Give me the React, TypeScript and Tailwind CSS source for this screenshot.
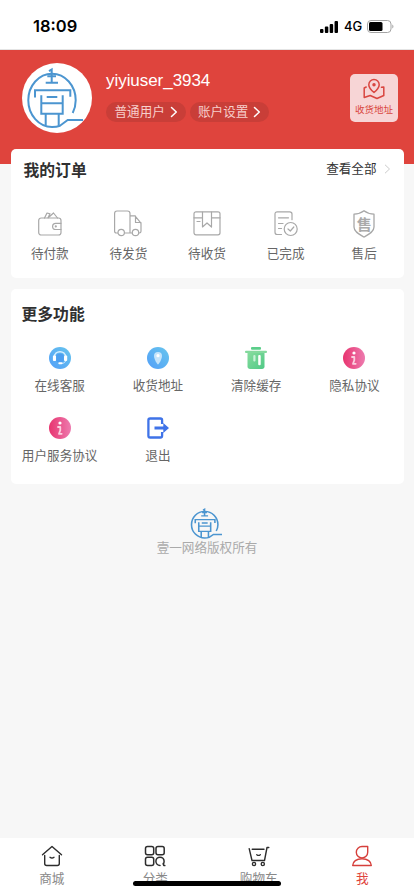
import React from 'react';

const iconProps = {
  fill: 'none',
  strokeLinecap: 'round' as const,
  strokeLinejoin: 'round' as const,
};

function Logo({ className }: { className: string }) {
  return (
    <svg viewBox="0 0 70 70" preserveAspectRatio="none" className={className} fill="none" stroke="#4b95d0">
      <path d="M50.700 50C52.700 46 53.700 42 53.700 37.300 53.700 22.600 43.100 10.700 30 10.700S6.300 22.600 6.300 37.300 16.900 64 30 64c3 0 5.700-.4 8-1.300L45.700 57H61" />
      <path d="M27 8.200l2.700-1.700v13.200M25.300 13.300H34M23.700 19.700H36" />
      <path d="M13 34.500V27.300H48.300v6.500M24.700 34H35.300" />
      <path d="M19.300 32.300v18.400h21.400V32.300M19.300 40.300h21.400M23.700 51v11.500M36.700 51v11.500" />
    </svg>
  );
}

function WalletIcon() {
  return (
    <svg viewBox="0 0 28 28" className="size-7" {...iconProps} stroke="#a8a8a8" strokeWidth="1.2">
      <rect x="2.700" y="8" width="22.300" height="17" rx="2.500" />
      <path d="M8.500 8l2.500-5 3 .8-2 4M12.500 7.500l5-4.500 4 5M25 13.300h-5.300a3 3 0 0 0 0 6.200H25" />
      <circle cx="19.800" cy="16.400" r=".5" />
    </svg>
  );
}

function TruckIcon() {
  return (
    <svg viewBox="0 0 28 28" className="size-7" {...iconProps} stroke="#a8a8a8" strokeWidth="1.2">
      <path d="M3.500 23H2.300c-1 0-1.700-.7-1.700-1.700V3.500C.6 2 1.700 1 3 1h10.500C15 1 16 2 16 3.500V23h2.300M10.700 23H16M16 5.800h5l4.500 5.500 1.500 2v8c0 1-.5 1.700-1.700 1.700M21.500 6v6.500H27" />
      <circle cx="7.200" cy="22.500" r="3.200" fill="#fff" />
      <circle cx="21.500" cy="22.500" r="3.200" fill="#fff" />
    </svg>
  );
}

function BoxIcon() {
  return (
    <svg viewBox="0 0 28 28" className="size-7" {...iconProps} stroke="#a8a8a8" strokeWidth="1.2">
      <rect x="1" y="1.800" width="26" height="23" rx="2" />
      <path d="M1 7.800h8.500M18.500 7.800H27M9.500 2v15l4.500-4 4.500 4V2M4 11.500h3" />
    </svg>
  );
}

function DoneIcon() {
  return (
    <svg viewBox="0 0 28 28" className="size-7" {...iconProps} stroke="#a8a8a8" strokeWidth="1.200">
      <path d="M9.500 24.500H5.300c-1.500 0-2.300-.8-2.300-2.300V4C3 2.500 3.800 1.800 5.300 1.800h12.400c1.500 0 2.300.7 2.300 2.200v5.700M6.500 7.800h10M6.500 13.500h4.500M6.500 18.500h3" />
      <circle cx="18.700" cy="19" r="6.500" />
      <path d="M16 19l2.300 2 3.500-4" />
    </svg>
  );
}

function ShieldIcon() {
  return (
    <span className="relative flex size-7 items-center justify-center">
      <svg viewBox="0 0 28 28" className="absolute inset-0 size-7" {...iconProps} stroke="#a8a8a8" strokeWidth="1.300">
        <path d="M14 .7c3 2.300 6.500 3.300 10 3.500V17c0 5-5.500 7.500-10 10-4.500-2.500-10-5-10-10V4.200C7.500 4 11 3 14 .7z" />
      </svg>
      <span className="text-[15px] leading-none font-bold text-[#aaa]">售</span>
    </span>
  );
}

function ServiceIcon() {
  return (
    <svg viewBox="0 0 22 22" className="size-[22px]">
      <defs>
        <linearGradient id="service" x1="0" y1="1" x2="1" y2="0">
          <stop stopColor="#539ff8" />
          <stop offset="1" stopColor="#67c5ed" />
        </linearGradient>
      </defs>
      <circle cx="11" cy="11" r="11" fill="url(#service)" />
      <path d="M5.300 10.500C5.300 2.800 16.700 2.800 16.700 10.500" fill="none" stroke="#d7efff" strokeWidth="1.500" />
      <rect x="3.900" y="8.500" width="3.200" height="5.500" rx="1" fill="#fff" />
      <rect x="15" y="8.500" width="3.200" height="5.500" rx="1" fill="#fff" />
      <path d="M7.200 8.500C8.500 5.800 13.500 5.800 14.800 8.500v4.700c0 3-7.600 3-7.600 0z" fill="#4c9ff0" />
      <path d="M16.500 14c-.5 1.700-1.700 2.200-3.500 2.300" fill="none" stroke="#cce8ff" strokeWidth="1" />
      <rect x="9.300" y="15.300" width="4.200" height="2" rx="1" fill="#fff" />
    </svg>
  );
}

function PinIcon() {
  return (
    <svg viewBox="0 0 22 22" className="size-[22px]">
      <circle cx="11" cy="11" r="11" fill="url(#service)" />
      <path d="M11 17.500c-.8 0-4-5.500-4-8.500a4 4 0 0 1 8 0c0 3-3.200 8.500-4 8.500z" fill="#c4e4fb" />
      <circle cx="11" cy="8.700" r="1.600" fill="#fff" />
    </svg>
  );
}

function TrashIcon() {
  return (
    <svg viewBox="0 0 22 22" className="size-[22px]">
      <defs>
        <linearGradient id="trash" x1="0" y1="0" x2="1" y2="1">
          <stop stopColor="#86dc9d" />
          <stop offset="1" stopColor="#50c986" />
        </linearGradient>
      </defs>
      <rect x="6" y="0" width="10" height="2.700" rx="1" fill="#5bce8a" />
      <path d="M2.500 5h17v14.500c0 1.500-1 2.500-2.500 2.500H5c-1.500 0-2.500-1-2.500-2.500z" fill="url(#trash)" />
      <rect x="0" y="3.700" width="22" height="2.400" rx="1" fill="#83d99d" />
      <rect x="8.300" y="8" width="2.200" height="6.500" rx="1" fill="#c9f1d7" />
      <rect x="13.200" y="8" width="2.500" height="10.300" rx="1" fill="#fff" />
    </svg>
  );
}

function InfoIcon() {
  return (
    <svg viewBox="0 0 22 22" className="size-[22px]">
      <defs>
        <linearGradient id="info" x1="0" y1="0" x2="1" y2="0">
          <stop stopColor="#e8346f" />
          <stop offset="1" stopColor="#ed7baf" />
        </linearGradient>
      </defs>
      <circle cx="11" cy="11" r="11" fill="url(#info)" />
      <circle cx="11" cy="6" r="1.600" fill="#fff" />
      <path d="M9 10h2.300v3.300L10 16.800h2.700" fill="none" stroke="#fbd0e0" strokeWidth="1.800" strokeLinecap="round" strokeLinejoin="round" />
    </svg>
  );
}

function ExitIcon() {
  return (
    <svg viewBox="0 0 22 22" className="size-[22px]">
      <path d="M14.300 7V3.200c0-1-.7-1.700-1.700-1.700H2.300C1.300 1.500.6 2.200.6 3.200v15.600c0 1 .7 1.700 1.700 1.700h10.300c1 0 1.700-.7 1.700-1.700V15" fill="none" stroke="#3f73e8" strokeWidth="2.300" className="overflow-visible" transform="translate(.8 0)" />
      <path d="M7.500 9.400h8.800V6L22 11l-5.700 5v-3.400H7.500z" fill="#3f73e8" />
    </svg>
  );
}

function HomeIcon() {
  return (
    <svg viewBox="0 0 22 22" className="size-[22px]" {...iconProps} stroke="#2d2d2d" strokeWidth="1.400">
      <path d="M1.500 9.700L11 1.500l9.500 8.200M3.700 10.500v8c0 1.300.8 2 2 2h10.600c1.200 0 2-.7 2-2v-8M9 12.300c1.200.9 2.800.9 4 0" />
    </svg>
  );
}

function CategoryIcon() {
  return (
    <svg viewBox="0 0 22 22" className="size-[22px]" {...iconProps} stroke="#2d2d2d" strokeWidth="1.500">
      <rect x="1.500" y="1.500" width="8.200" height="8.200" rx="2" />
      <rect x="12" y="1.500" width="8.200" height="8.200" rx="2" />
      <rect x="1.500" y="12.200" width="8.200" height="8.200" rx="2" />
      <path d="M16 20.400a4.100 4.100 0 1 1 4.100-4.100c0 1.200-.3 2.200-.9 2.900M19.200 18.500l.6 2 1 .1" />
    </svg>
  );
}

function CartIcon() {
  return (
    <svg viewBox="0 0 22 22" className="size-[22px]" {...iconProps} stroke="#2d2d2d" strokeWidth="1.400">
      <path d="M1.200 3.700L4 15.500h12.500L19 2.500h1.800M4.200 4.200H16M8.800 9.700c1 .8 2.500.8 3.500 0" />
      <circle cx="6" cy="19" r="1.600" />
      <circle cx="14.800" cy="19" r="1.600" />
    </svg>
  );
}

function MeIcon() {
  return (
    <svg viewBox="0 0 22 22" className="size-[22px]" {...iconProps} stroke="#d6403c" strokeWidth="1.400">
      <path d="M16.700 1.500H11a5.700 5.700 0 1 0 5.700 5.700zM1.700 20.500c0-4 3.800-6.700 9.300-6.700s9.300 2.700 9.300 6.700z" />
    </svg>
  );
}

const orders = [
  { name: '待付款', icon: <WalletIcon /> },
  { name: '待发货', icon: <TruckIcon /> },
  { name: '待收货', icon: <BoxIcon /> },
  { name: '已完成', icon: <DoneIcon /> },
  { name: '售后', icon: <ShieldIcon /> },
];

const features = [
  { name: '在线客服', icon: <ServiceIcon /> },
  { name: '收货地址', icon: <PinIcon /> },
  { name: '清除缓存', icon: <TrashIcon /> },
  { name: '隐私协议', icon: <InfoIcon /> },
  { name: '用户服务协议', icon: <InfoIcon /> },
  { name: '退出', icon: <ExitIcon /> },
];

const tabs = [
  { name: '商城', icon: <HomeIcon />, active: false },
  { name: '分类', icon: <CategoryIcon />, active: false },
  { name: '购物车', icon: <CartIcon />, active: false },
  { name: '我', icon: <MeIcon />, active: true },
];

function Arrow({ className }: { className: string }) {
  return (
    <svg viewBox="0 0 8 12" className={className} {...iconProps} stroke="currentColor">
      <path d="M1.500 1.500L6.300 6l-4.800 4.500" />
    </svg>
  );
}

function App() {
  return (
    <div className="relative flex h-[896px] w-[414px] flex-col overflow-hidden bg-[#f7f7f7] font-['Liberation_Sans','Noto_Sans_CJK_SC',sans-serif] whitespace-nowrap">
      {/* Status bar */}
      <div className="flex h-[50px] shrink-0 items-center justify-between border-b border-[#e4e4e4] bg-white pt-1 pr-[20px] pl-[33px] font-[Inter,sans-serif] text-black">
        <span className="text-[16.500px] font-semibold">18:09</span>
        <div className="flex items-center">
          <svg viewBox="0 0 18.200 12" className="h-3 w-[18px]">
            <rect x="0" y="8" width="3.500" height="4" rx="1" />
            <rect x="4.900" y="5.500" width="3.500" height="6.500" rx="1" />
            <rect x="9.800" y="3" width="3.500" height="9" rx="1" />
            <rect x="14.700" y="0" width="3.500" height="12" rx="1" />
          </svg>
          <span className="ml-[6px] w-[18px] text-[13px] font-medium">4G</span>
          <svg viewBox="0 0 27 13" className="ml-[5px] h-[13px] w-[27px]">
            <rect x=".5" y=".5" width="23.500" height="12" rx="3.500" fill="none" stroke="#a4a4a4" />
            <rect x="2" y="2" width="13.500" height="9" rx="1.500" />
            <path d="M25.300 4.500c1.500.5 1.500 3.500 0 4z" fill="#a4a4a4" />
          </svg>
        </div>
      </div>

      {/* Profile */}
      <div className="flex h-[114px] shrink-0 items-start bg-[#df443d] pt-[13px] pr-4 pl-[22px] text-white">
        <div className="flex size-[70px] rounded-full bg-white">
          <Logo className="size-[70px] stroke-2" />
        </div>
        <div className="ml-[14px] pt-[8px]">
          <div className="text-[17px] leading-[20px] tracking-[-0.05px]">yiyiuser_3934</div>
          <div className="mt-[11px] flex gap-1 text-[12.600px] text-[#f7cfcc]">
            <div className="flex h-5 w-[80px] items-center rounded-full bg-[#c93e38] pl-[8.500px] leading-5">
              普通用户
              <Arrow className="ml-[5px] h-[12px] w-[8px] stroke-[1.500] text-white" />
            </div>
            <div className="flex h-5 w-[79px] items-center rounded-full bg-[#c93e38] pl-[8px] leading-5">
              账户设置
              <Arrow className="ml-[5px] h-[12px] w-[8px] stroke-[1.500] text-white" />
            </div>
          </div>
        </div>
        <div className="mt-[11px] ml-auto flex size-[48px] flex-col items-center rounded-[5px] bg-[#f7d5d6] pt-[4px] text-[#d94640]">
          <svg viewBox="0 0 22 22" className="size-[22px]" {...iconProps} stroke="currentColor" strokeWidth="1.500">
            <path d="M11 14.500C8 12 5.800 9.500 5.800 6.700a5.200 5.200 0 0 1 10.400 0c0 2.800-2.200 5.300-5.200 7.800zM3.200 9L1.200 10v9.500l6-2 6.800 3 6.800-3V9l-2.300.3" />
            <circle cx="11" cy="6.700" r="1" fill="currentColor" />
          </svg>
          <span className="mt-[3px] text-[9.500px] leading-[14px]">收货地址</span>
        </div>
      </div>

      {/* My orders */}
      <div className="relative mx-[10.500px] -mt-[15px] h-[129px] shrink-0 rounded-[5px] bg-white">
        <div className="flex items-center justify-between pt-[10px] pr-[13px] pl-[13px]">
          <h2 className="text-[15.800px] leading-6 font-bold text-[#303030]">我的订单</h2>
          <div className="flex items-center pb-[4px] text-[12.600px] leading-5 text-[#333]">
            查看全部
            <Arrow className="ml-[7px] h-[12px] w-[7px] text-[#c4c4c4]" />
          </div>
        </div>
        <div className="mt-[27px] grid grid-cols-5">
          {orders.map((item) => (
            <div key={item.name} className="flex flex-col items-center">
              {item.icon}
              <span className="mt-[6px] text-[12.600px] leading-5 text-[#666]">{item.name}</span>
            </div>
          ))}
        </div>
      </div>

      {/* More features */}
      <div className="mx-[10.500px] mt-[11px] h-[195px] shrink-0 rounded-[5px] bg-white pt-[14px]">
        <h2 className="pl-[11px] text-[15.800px] leading-6 font-bold text-[#303030]">更多功能</h2>
        <div className="mt-[20px] grid grid-cols-4 gap-y-[21px]">
          {features.map((item) => (
            <div key={item.name} className="flex flex-col items-center">
              {item.icon}
              <span className="mt-[7px] text-[12.600px] leading-5 text-[#666]">{item.name}</span>
            </div>
          ))}
        </div>
      </div>

      {/* Copyright */}
      <div className="mt-[22px] flex flex-col items-center">
        <Logo className="h-[35px] w-[39px] stroke-[2.800]" />
        <span className="-mt-[3px] text-[12.600px] leading-5 text-[#aaa]">壹一网络版权所有</span>
      </div>

      {/* Tab bar */}
      <div className="mt-auto grid h-[58px] shrink-0 grid-cols-4 bg-white pt-[7px]">
        {tabs.map((tab) => (
          <div key={tab.name} className="flex flex-col items-center">
            {tab.icon}
            <span className={tab.active ? 'mt-[2px] text-[12.600px] leading-5 text-[#df443d]' : 'mt-[2px] text-[12.600px] leading-5 text-[#888]'}>
              {tab.name}
            </span>
          </div>
        ))}
      </div>

      {/* Home indicator */}
      <div className="absolute bottom-[10px] left-[133px] h-[5px] w-[148px] rounded-full bg-black" />
    </div>
  );
}

export default App;
